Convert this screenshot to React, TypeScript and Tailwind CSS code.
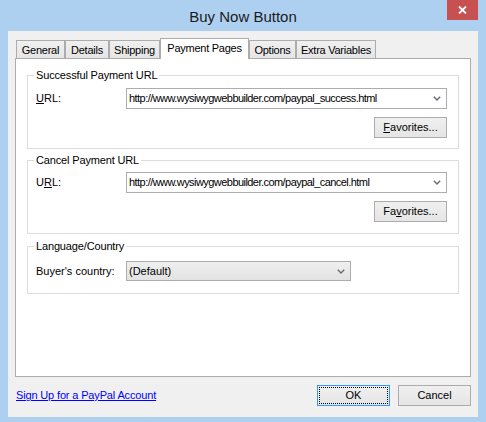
import React from "react";

const font = { fontFamily: '"Liberation Sans", Arial, sans-serif' };

function Chevron() {
  return (
    <svg width="8" height="5" viewBox="0 0 8 5" className="shrink-0">
      <path d="M0.8 0.8 L4 4 L7.2 0.8" fill="none" stroke="#6a6a6a" strokeWidth="1.4" />
    </svg>
  );
}

function Combo({ text }: { text: string }) {
  return (
    <div className="w-[321px] h-[21px] bg-white border border-[#abadb3] flex items-center justify-between pl-[2px] pr-[5px]">
      <span className="text-[11px] leading-[13px] text-black whitespace-nowrap tracking-[-0.55px]">{text}</span>
      <Chevron />
    </div>
  );
}

function Btn({ children, focused = false, w = "w-[73px]" }: { children: React.ReactNode; focused?: boolean; w?: string }) {
  return (
    <div
      className={`${w} h-[21px] flex items-center justify-center text-[11px] text-black border bg-gradient-to-b from-[#f0f0f0] to-[#e5e5e5] ${
        focused ? "border-[#3399ff] outline-1 outline-dotted outline-black outline-offset-[-3px]" : "border-[#acacac]"
      }`}
    >
      {children}
    </div>
  );
}

function Group({ title, h, mt, children }: { title: string; h: string; mt: string; children: React.ReactNode }) {
  return (
    <div className={`relative w-[432px] ${h} ${mt} border border-[#dcdcdc]`}>
      <span className="absolute left-[6px] -top-[8px] bg-white px-[2px] text-[11px] leading-[14px] text-black whitespace-nowrap tracking-[-0.15px]">
        {title}
      </span>
      {children}
    </div>
  );
}

const tabs = [
  { label: "General", w: "w-[49px]" },
  { label: "Details", w: "w-[44px]" },
  { label: "Shipping", w: "w-[51px]" },
  { label: "Payment Pages", w: "w-[89px]", selected: true },
  { label: "Options", w: "w-[47px]" },
  { label: "Extra Variables", w: "w-[80px]" },
];

export default function App() {
  return (
    <div className="w-[486px] h-[422px] bg-[#aed0f0] flex flex-col" style={font}>
      {/* Title bar */}
      <div className="h-[31px] grid grid-cols-[1fr_auto_1fr] shrink-0">
        <div />
        <div className="text-[15px] leading-[31px] text-[#1b1b1b] pt-px">Buy Now Button</div>
        <div className="flex justify-end items-start pr-[8px]">
          <div className="w-[31px] h-[20px] bg-[#c75050] flex items-center justify-center">
            <svg width="9" height="8" viewBox="0 0 9 8">
              <path d="M1 0.5 L8 7.5 M8 0.5 L1 7.5" stroke="white" strokeWidth="1.8" />
            </svg>
          </div>
        </div>
      </div>

      {/* Client area */}
      <div className="mx-[8px] h-[386px] bg-[#f0f0f0] pl-[7px] pr-[7px] pt-[7px] flex flex-col">
        {/* Tabs */}
        <div className="h-[20px] flex items-end pl-[1px]">
          {tabs.map((t) =>
            t.selected ? (
              <div
                key={t.label}
                className={`${t.w} h-[21px] -mb-px relative z-10 bg-white border-l border-t border-r border-[#acacac] flex items-start justify-center pt-[2px] text-[11px] leading-[14px] text-black tracking-[-0.25px]`}
              >
                {t.label}
              </div>
            ) : (
              <div
                key={t.label}
                className={`${t.w} h-[18px] bg-gradient-to-b from-[#f0f0f0] to-[#e5e5e5] border-l border-t border-r border-[#acacac] flex items-start justify-center pt-[2px] text-[11px] leading-[14px] text-black tracking-[-0.25px]`}
              >
                {t.label}
              </div>
            )
          )}
        </div>

        {/* Panel */}
        <div className="h-[319px] bg-white border border-[#acacac] pl-[11px] pt-[16px] flex flex-col">
          <Group title="Successful Payment URL" h="h-[74px]" mt="mt-0">
            <div className="pt-[12px] pl-[8px] pr-[10px] flex flex-col">
              <div className="flex items-center">
                <span className="w-[90px] text-[11px] text-black">
                  <span className="underline">U</span>RL:
                </span>
                <Combo text="http://www.wysiwygwebbuilder.com/paypal_success.html" />
              </div>
              <div className="flex justify-end mt-[8px] pr-[1px]">
                <Btn>
                  <span>
                    <span className="underline">F</span>avorites...
                  </span>
                </Btn>
              </div>
            </div>
          </Group>

          <Group title="Cancel Payment URL" h="h-[74px]" mt="mt-[11px]">
            <div className="pt-[11px] pl-[8px] pr-[10px] flex flex-col">
              <div className="flex items-center">
                <span className="w-[90px] text-[11px] text-black">
                  U<span className="underline">R</span>L:
                </span>
                <Combo text="http://www.wysiwygwebbuilder.com/paypal_cancel.html" />
              </div>
              <div className="flex justify-end mt-[8px] pr-[1px]">
                <Btn>
                  <span>
                    Fa<span className="underline">v</span>orites...
                  </span>
                </Btn>
              </div>
            </div>
          </Group>

          <Group title="Language/Country" h="h-[48px]" mt="mt-[12px]">
            <div className="pt-[14px] pl-[8px] flex items-center">
              <span className="w-[90px] text-[11px] text-black">Buyer's country:</span>
              <div className="w-[225px] h-[20px] border border-[#acacac] bg-gradient-to-b from-[#efefef] to-[#e3e3e3] flex items-center justify-between pl-[2px] pr-[5px]">
                <span className="text-[11px] leading-[13px] text-black">(Default)</span>
                <Chevron />
              </div>
            </div>
          </Group>
        </div>

        {/* Bottom row */}
        <div className="mt-[8px] flex items-center justify-between pl-[1px]">
          <span className="text-[11px] text-[#0000ff] underline tracking-[-0.15px]">Sign Up for a PayPal Account</span>
          <div className="flex gap-[8px]">
            <Btn focused>OK</Btn>
            <Btn>Cancel</Btn>
          </div>
        </div>
      </div>
    </div>
  );
}
